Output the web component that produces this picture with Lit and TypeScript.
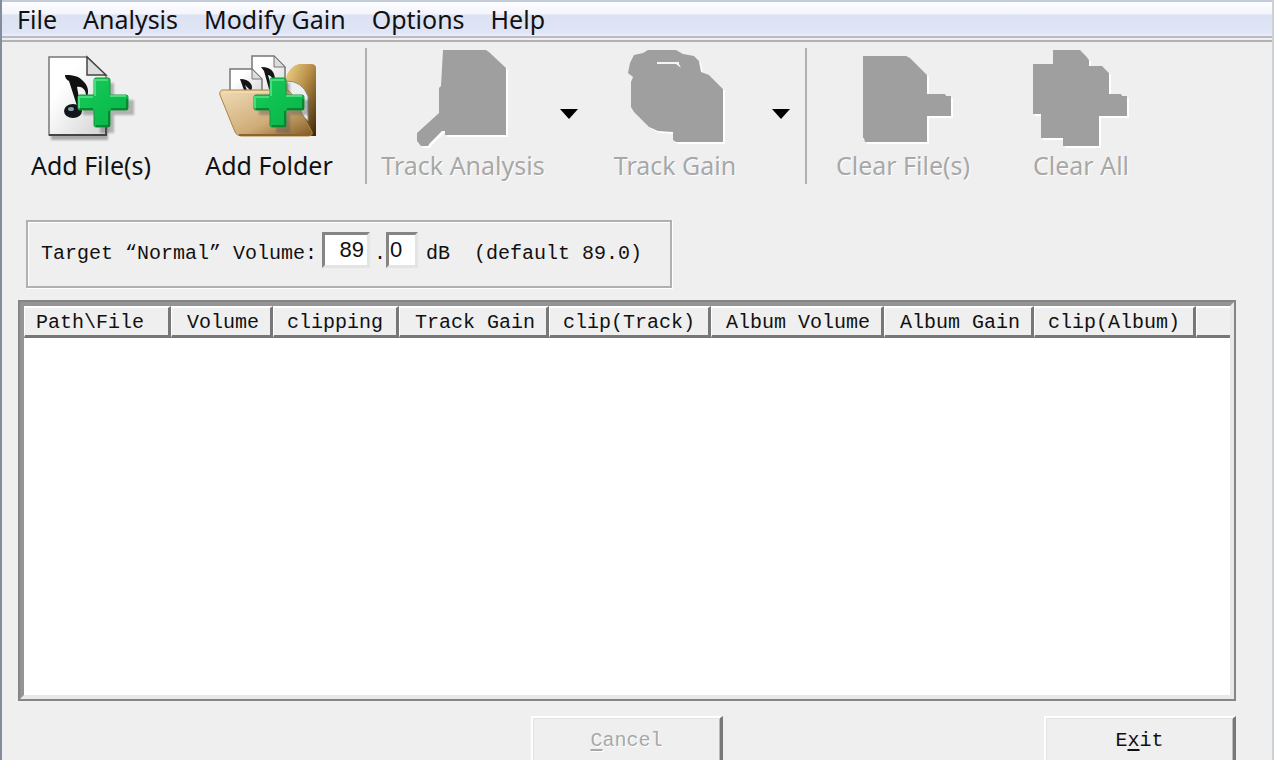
import { LitElement, html, css, svg } from "lit";
import { customElement } from "lit/decorators.js";

const plus = (x: number, y: number) => svg`
  <g transform="translate(${x} ${y})">
    <path d="M20 3h14v17h20v15h-20v18h-14v-18h-17v-15h17z" fill="#555" opacity=".4" transform="translate(3 3)" filter="url(#soft)"/>
    <path d="M19 1h12q2 0 2 2v15h16q2 0 2 2v11q0 2-2 2h-16v15q0 2-2 2h-12q-2 0-2-2v-15h-14q-2 0-2-2v-11q0-2 2-2h14v-15q0-2 2-2z" fill="url(#green)" stroke="#16973f" stroke-width="1"/>
    <path d="M18 19v-16h13M2 31v-11h14M33 19h16" fill="none" stroke="#48dc7d" stroke-width="2"/>
    <path d="M32 34v15h-13M50 22v10h-16M3 32h13" fill="none" stroke="#07872f" stroke-width="2"/>
  </g>`;

const defs = svg`
  <defs>
    <filter id="soft" x="-20%" y="-20%" width="140%" height="140%"><feGaussianBlur stdDeviation="1.2"/></filter>
    <linearGradient id="paper" x1="0" y1="0" x2="1" y2="1"><stop offset=".3" stop-color="#fff"/><stop offset="1" stop-color="#d2d2d2"/></linearGradient>
    <linearGradient id="green" x1="0" y1="0" x2="1" y2="1"><stop stop-color="#17cb58"/><stop offset="1" stop-color="#06b548"/></linearGradient>
    <linearGradient id="back" x1="0" y1="0" x2="1" y2="1"><stop stop-color="#f6d98e"/><stop offset=".45" stop-color="#b88f48"/><stop offset="1" stop-color="#3a2405"/></linearGradient>
    <linearGradient id="front" x1="0" y1="0" x2="1" y2="1"><stop stop-color="#f0dcb8"/><stop offset=".6" stop-color="#cfac77"/><stop offset="1" stop-color="#80591f"/></linearGradient>
  </defs>`;

const icons = {
  addFile: svg`${defs}
    <path d="M8 9h37l20 20v61h-57z" fill="#666" opacity=".5" filter="url(#soft)"/>
    <path d="M6 7h38l19 19v59h-57z" fill="url(#paper)" stroke="#777" stroke-width="1.5"/>
    <path d="M6 85h57v-10" fill="none" stroke="#444" stroke-width="2"/>
    <path d="M44 7v18h19z" fill="#ddd" stroke="#444" stroke-width="1.5"/>
    <path d="M22 25c5 0 12 0 17 5c6 5 8 12 4 19c1-8-3-13-9-12l4 22h-3l-9-28q-4-2-4-6z" fill="#111"/>
    <ellipse cx="30" cy="61" rx="9" ry="7" fill="#10161c"/>
    <ellipse cx="28" cy="59" rx="3" ry="2" fill="#8c9aa6"/>
    ${plus(34, 27)}`,
  addFolder: svg`${defs}
    <path d="M31 6h22l11 11v31h-33z" fill="url(#paper)" stroke="#777" stroke-width="1.5"/>
    <path d="M53 6v11h11z" fill="#ddd" stroke="#777"/>
    <path d="M40 17q9 0 12 5q3 5 1 9q-3-6-6-6l4 14h-3l-5-18z" fill="#151515"/>
    <path d="M9 19h22l10 10v20h-32z" fill="url(#paper)" stroke="#777" stroke-width="1.5"/>
    <path d="M31 19v10h10z" fill="#ddd" stroke="#777"/>
    <path d="M19 29q8 0 11 5q2 3 0 7l-6-6l3 8h-3z" fill="#151515"/>
    <path d="M64 30q4-14 14-16h12q5 0 5 4v68h-31z" fill="url(#back)"/>
    <path d="M66 31q15 0 21 15v25l-21-22z" fill="#eee" stroke="#888"/>
    <path d="M2 40h62q5 0 7 5l20 37q1 4-4 4h-67q-4 0-6-4l-15-37q-1-5 3-5z" fill="url(#front)" stroke="#ad8348" stroke-width="1"/>
    <path d="M3 42h61" stroke="#f6deb0" stroke-width="1.5"/>
    <path d="M18 85h70" stroke="#8c6426" stroke-width="2"/>
    ${plus(32, 27)}`,
  trackAnalysis: svg`
    <path d="M28 0h43l3 2 17 16v67h-61v-4h-3l-12 12-2 3h-7l-4-5v-8l11-10 11-10v-25l2-2z"/>`,
  trackGain: svg`
    <path d="M21 0h28l7 4 11 2 5 5 2 11 8 3 14 14v53h-47l-3-2v-8l-15-1-9-4-15-15-3-5v-25l2-5-5-4 2-10 4-8 9-2z"/>
    <path class="slot" d="M30 12h22v2l2 4-5-4h-19z"/>`,
  clearFiles: svg`
    <path d="M8 6h43l4 2 17 17v19h18l1 2h5v20h-24v26h-62l-1-4h-1z"/>`,
  clearAll: svg`
    <path d="M20 0h27l6 6 3 4v6h13l7 7v21h12l1 2h5v20h-28v30h-36v-8h-22v-24h-8v-50h20z"/>`,
};

@customElement("app-root")
export class AppRoot extends LitElement {
  static styles = css`
    :host {
      display: block;
      font-family: "Liberation Mono", monospace;
      font-size: 20px;
      line-height: 24px;
      color: #111;
    }
    * { box-sizing: border-box; }
    button { font: inherit; color: inherit; background: none; border: 0; padding: 0; margin: 0; }
    .window {
      display: flex;
      flex-direction: column;
      height: 100vh;
      overflow: hidden;
      background: #efefef;
      border-left: 2px solid #838c9b;
      border-right: 2px solid #cbd3d8;
    }
    .menu {
      flex: none;
      display: flex;
      height: 38px;
      padding-left: 2px;
      border-top: 2px solid #c3ccda;
      border-bottom: 2px solid #b9bcc6;
      background: linear-gradient(#fdfdff 0, #f3f5fc 12px, #dde2f3 13px, #dfe4f6 30px, #eceffa 100%);
    }
    .menu button {
      padding: 0 13px;
      font: 25px/34px "Noto Sans", sans-serif;
    }
    .tools {
      flex: none;
      display: flex;
      align-items: flex-start;
      margin-top: 2px;
      padding-top: 6px;
      border-top: 2px solid #b2b2b2;
      height: 152px;
      font: 25px/34px "Noto Sans", sans-serif;
    }
    .tool {
      flex: 0 0 178px;
      display: flex;
      flex-direction: column;
      align-items: center;
      padding-top: 2px;
      white-space: nowrap;
    }
    .tool svg { width: 96px; height: 98px; overflow: visible; display: block; }
    .tool:disabled { color: #a8a8a8; text-shadow: 1px 1px #fff; }
    .tool:disabled svg { fill: #9f9f9f; filter: drop-shadow(2px 2px 0 #fff); }
    .tool svg .slot { fill: #f4f4f4; }
    .drop { flex: 0 0 34px; height: 132px; display: flex; align-items: center; justify-content: center; }
    .drop svg { width: 18px; height: 10px; fill: #000; }
    .rule { flex: none; width: 2px; height: 136px; margin: 0 7px; background: #b0b0b0; }
    .target {
      flex: none;
      align-self: flex-start;
      display: flex;
      align-items: flex-start;
      margin: 28px 0 0 24px;
      padding: 10px 28px 10px 13px;
      border: 2px solid #b0b0b0;
      box-shadow: inset 1px 1px #fff, 1px 1px #fff;
      line-height: 44px;
      white-space: pre;
    }
    .field {
      height: 36px;
      padding: 0 3px;
      border: 3px solid;
      border-color: #858585 #e4e4e4 #e4e4e4 #858585;
      border-radius: 0;
      outline: 0;
      background: #fff;
      color: #111;
      font: 22px/30px "Liberation Sans", sans-serif;
    }
    .whole { width: 48px; margin: 0 4px 0 5px; text-align: right; }
    .tenth { width: 32px; padding: 0 1px; margin-right: 8px; }
    .list {
      flex: 1;
      min-height: 0;
      margin: 12px 36px 0 16px;
      border: 2px solid #858585;
      background: #fff;
    }
    .inner {
      height: 100%;
      overflow: hidden;
      border: 4px solid;
      border-color: #949494 #e8e8e8 #e8e8e8 #949494;
    }
    table { width: 100%; table-layout: fixed; border-collapse: separate; border-spacing: 0; }
    th {
      height: 32px;
      padding: 3px 11px 0;
      font-weight: 400;
      white-space: nowrap;
      background: #efefef;
      border: solid;
      border-width: 2px 3px 3px 1px;
      border-color: #fff #777 #777 #fff;
    }
    th:last-child { border-right: 0; }
    .left { text-align: left; }
    .right { text-align: right; }
    .center { text-align: center; padding: 3px 0 0; }
    .c1 { width: 147px; }
    .c2 { width: 102px; }
    .c3 { width: 126px; }
    .c4 { width: 150px; }
    .c5 { width: 162px; }
    .c6 { width: 173px; }
    .c7 { width: 150px; }
    .c8 { width: 162px; }
    .actions {
      flex: 0 0 44px;
      min-height: 0;
      margin: 15px 36px 0 16px;
      display: grid;
      grid-template-columns: 1fr 192px 1fr;
      align-items: start;
    }
    .actions button {
      width: 192px;
      height: 50px;
      border: solid;
      border-width: 2px 3px 3px 2px;
      border-color: #fff #777 #777 #fff;
      box-shadow: inset 1px 1px #e2e2e2, inset -1px -1px #bbb;
    }
    .actions button:disabled { color: #a8a8a8; text-shadow: 1px 1px #fff; }
    .cancel { grid-column: 2; }
    .exit { justify-self: end; }
    u { text-underline-offset: 3px; text-decoration-thickness: 2px; }
  `;

  private tool(label: string, icon: unknown, disabled = false) {
    return html`<button class="tool" ?disabled=${disabled}>
      <svg viewBox="0 0 96 98" aria-hidden="true">${icon}</svg>
      <span>${label}</span>
    </button>`;
  }

  private drop(label: string) {
    return html`<button class="drop" aria-label=${label}>
      <svg viewBox="0 0 18 10"><path d="M0 0h18l-9 10z"/></svg>
    </button>`;
  }

  render() {
    return html`
      <div class="window">
        <nav class="menu">
          ${["File", "Analysis", "Modify Gain", "Options", "Help"].map((m) => html`<button>${m}</button>`)}
        </nav>
        <div class="tools" role="toolbar">
          ${this.tool("Add File(s)", icons.addFile)}
          ${this.tool("Add Folder", icons.addFolder)}
          <div class="rule"></div>
          ${this.tool("Track Analysis", icons.trackAnalysis, true)}
          ${this.drop("Analysis type")}
          ${this.tool("Track Gain", icons.trackGain, true)}
          ${this.drop("Gain type")}
          <div class="rule"></div>
          ${this.tool("Clear File(s)", icons.clearFiles, true)}
          ${this.tool("Clear All", icons.clearAll, true)}
        </div>
        <div class="target"><label for="whole">Target “Normal” Volume:</label><input id="whole" class="field whole" value="89"><label for="tenth">.</label><input id="tenth" class="field tenth" value="0"><span>dB  (default 89.0)</span></div>
        <div class="list">
          <div class="inner">
            <table>
              <thead>
                <tr>
                  <th class="c1 left">Path\\File</th>
                  <th class="c2 right">Volume</th>
                  <th class="c3 center">clipping</th>
                  <th class="c4 right">Track Gain</th>
                  <th class="c5 center">clip(Track)</th>
                  <th class="c6 right">Album Volume</th>
                  <th class="c7 right">Album Gain</th>
                  <th class="c8 center">clip(Album)</th>
                  <th></th>
                </tr>
              </thead>
              <tbody></tbody>
            </table>
          </div>
        </div>
        <div class="actions">
          <button class="cancel" disabled><u>C</u>ancel</button>
          <button class="exit">E<u>x</u>it</button>
        </div>
      </div>
    `;
  }
}
